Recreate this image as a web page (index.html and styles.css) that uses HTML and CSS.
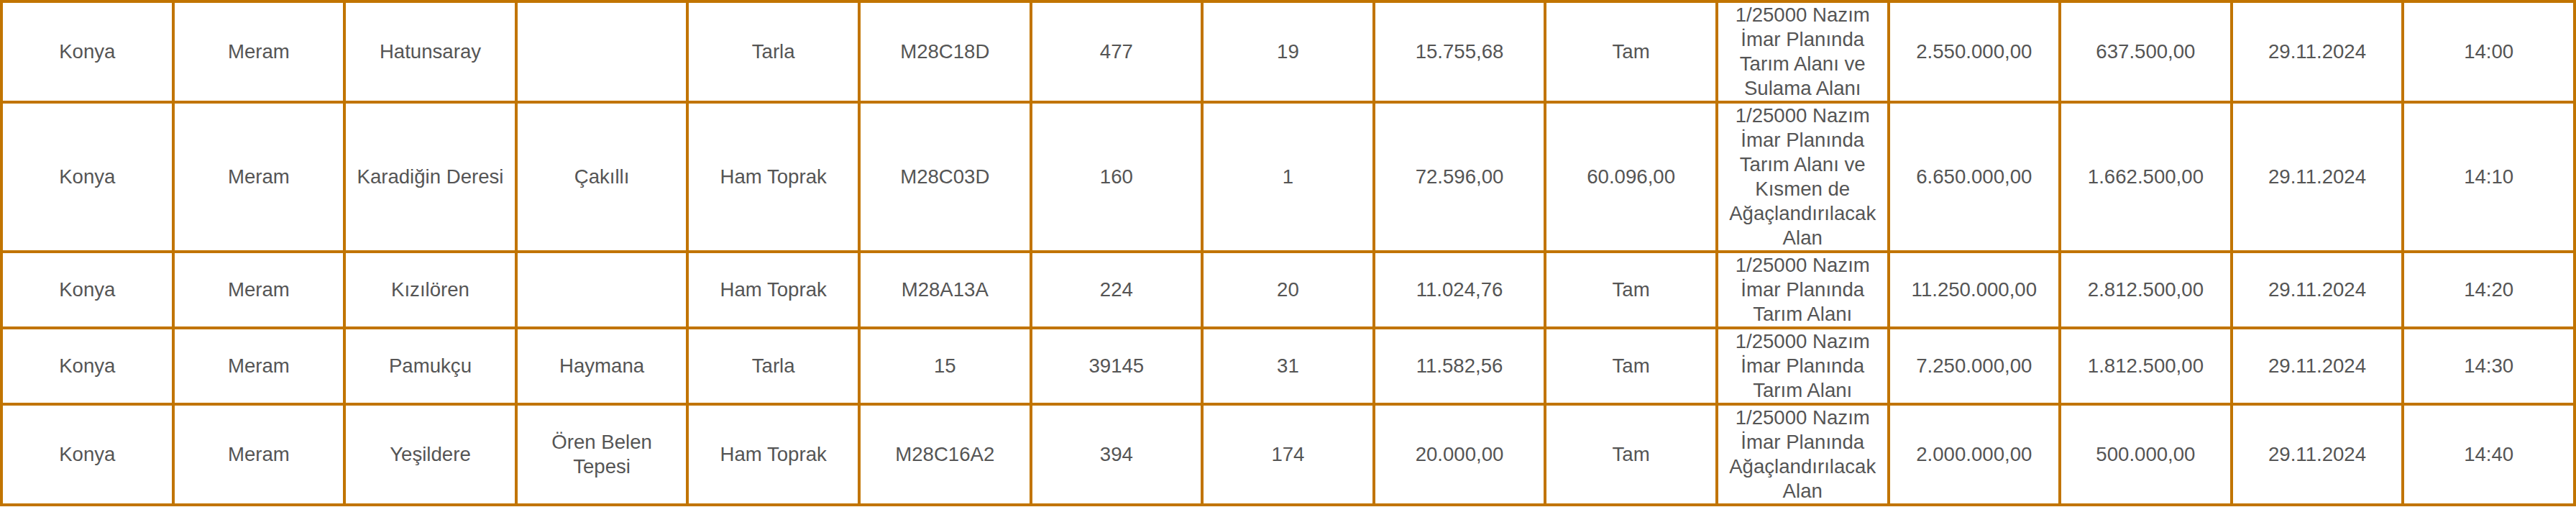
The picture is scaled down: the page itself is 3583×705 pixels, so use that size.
FILE: index.html
```html
<!DOCTYPE html>
<html lang="tr">
<head>
<meta charset="utf-8">
<title>Konya Meram</title>
<link rel="stylesheet" href="styles.css">
</head>
<body>
<table class="grid">
  <colgroup>
    <col><col><col><col><col><col><col><col><col><col><col><col><col><col><col>
  </colgroup>
  <tbody>
    <tr>
      <td>Konya</td><td>Meram</td><td>Hatunsaray</td><td></td><td>Tarla</td><td>M28C18D</td><td>477</td><td>19</td><td>15.755,68</td><td>Tam</td><td>1/25000 Nazım İmar Planında Tarım Alanı ve Sulama Alanı</td><td>2.550.000,00</td><td>637.500,00</td><td>29.11.2024</td><td>14:00</td>
    </tr>
    <tr>
      <td>Konya</td><td>Meram</td><td>Karadiğin Deresi</td><td>Çakıllı</td><td>Ham Toprak</td><td>M28C03D</td><td>160</td><td>1</td><td>72.596,00</td><td>60.096,00</td><td>1/25000 Nazım İmar Planında Tarım Alanı ve Kısmen de Ağaçlandırılacak Alan</td><td>6.650.000,00</td><td>1.662.500,00</td><td>29.11.2024</td><td>14:10</td>
    </tr>
    <tr>
      <td>Konya</td><td>Meram</td><td>Kızılören</td><td></td><td>Ham Toprak</td><td>M28A13A</td><td>224</td><td>20</td><td>11.024,76</td><td>Tam</td><td>1/25000 Nazım İmar Planında Tarım Alanı</td><td>11.250.000,00</td><td>2.812.500,00</td><td>29.11.2024</td><td>14:20</td>
    </tr>
    <tr>
      <td>Konya</td><td>Meram</td><td>Pamukçu</td><td>Haymana</td><td>Tarla</td><td>15</td><td>39145</td><td>31</td><td>11.582,56</td><td>Tam</td><td>1/25000 Nazım İmar Planında Tarım Alanı</td><td>7.250.000,00</td><td>1.812.500,00</td><td>29.11.2024</td><td>14:30</td>
    </tr>
    <tr>
      <td>Konya</td><td>Meram</td><td>Yeşildere</td><td>Ören Belen Tepesi</td><td>Ham Toprak</td><td>M28C16A2</td><td>394</td><td>174</td><td>20.000,00</td><td>Tam</td><td>1/25000 Nazım İmar Planında Ağaçlandırılacak Alan</td><td>2.000.000,00</td><td>500.000,00</td><td>29.11.2024</td><td>14:40</td>
    </tr>
  </tbody>
</table>
</body>
</html>
```

FILE: styles.css
```css
html, body {
  margin: 0;
  padding: 0;
  background: #ffffff;
}

.grid {
  width: 3583px;
  table-layout: fixed;
  border-collapse: collapse;
  font-family: "Liberation Sans", Arial, Helvetica, sans-serif;
  font-size: 27.6px;
  line-height: 34px;
  color: #555555;
}

.grid td {
  border: 4px solid #c17400;
  padding: 0 8px;
  text-align: center;
  vertical-align: middle;
}
```
